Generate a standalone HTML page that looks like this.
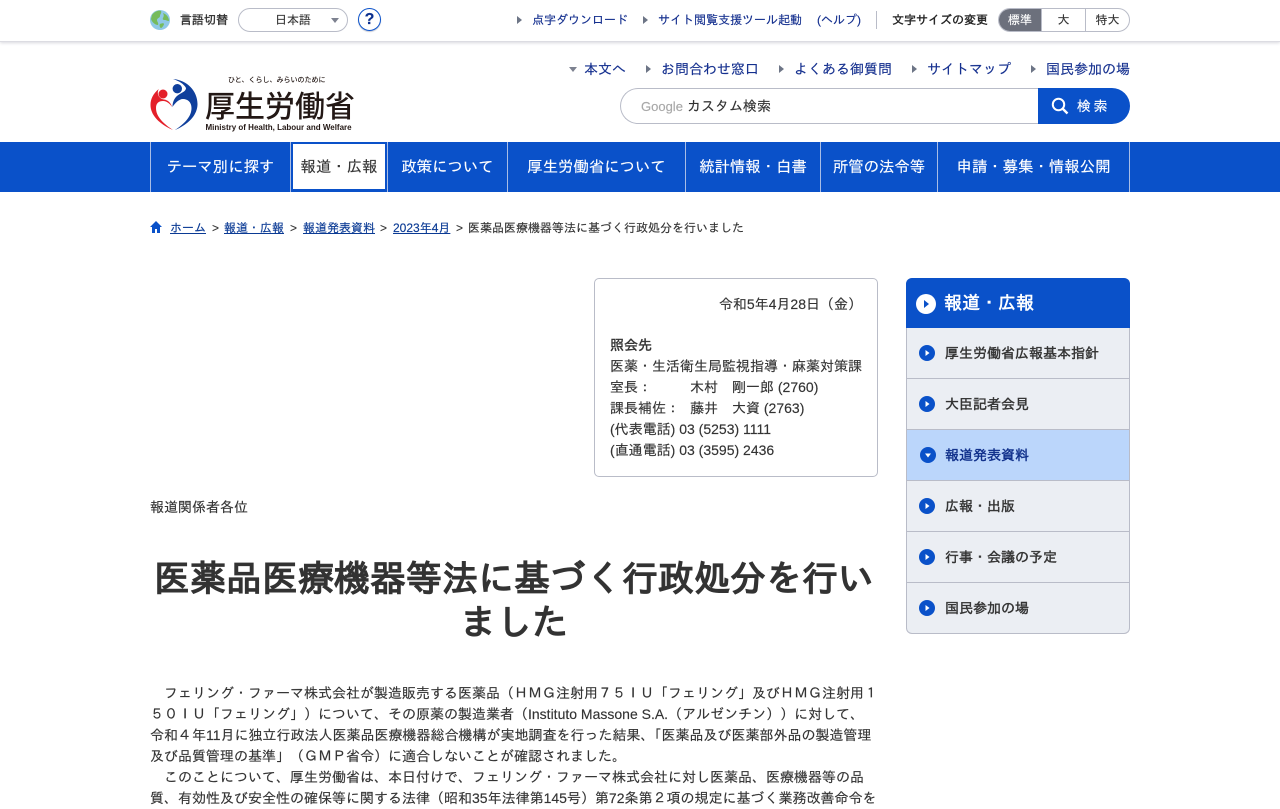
<!DOCTYPE html>
<html lang="ja">
<head>
<meta charset="utf-8">
<title>医薬品医療機器等法に基づく行政処分を行いました</title>
<style>
*{box-sizing:border-box}
html,body{margin:0;padding:0}
body{width:1280px;height:800px;overflow:hidden;background:#fff;position:relative;color:#333;font-family:"Liberation Sans","IPAGothic",sans-serif;font-size:14px;-webkit-text-stroke:.15px currentColor}
a{color:inherit;text-decoration:none}
.a{position:absolute;white-space:nowrap}
.bd{font-weight:normal;-webkit-text-stroke:.03em currentColor}
.top{position:absolute;left:0;top:0;width:1280px;height:42px;background:#fff;border-bottom:1px solid #dcdce2;box-shadow:0 1px 3px rgba(60,60,90,.2)}
.tri{position:absolute;width:0;height:0;border-style:solid;border-color:transparent transparent transparent #6d7586;border-width:4px 0 4px 5px}
.blue{color:#15308f}
.nav{position:absolute;left:0;top:142px;width:1280px;height:50px;background:#0a51c9}
.nav a{position:absolute;top:0;height:50px;line-height:52px;color:#fff;font-size:15.4px;text-align:center;border-left:1px solid #a9bde6;white-space:nowrap}
.crumb{position:absolute;top:220px;font-size:12px;line-height:16px;color:#333;white-space:nowrap}
.crumb u{color:#0a3a94}
.side{position:absolute;left:906px;top:278px;width:224px;height:356px;border:1px solid #b9bcc8;border-top:0;border-radius:6px;overflow:hidden;background:#ebeef3}
.h{position:absolute;left:906px;top:278px;width:224px;height:50px;background:#0a51c9;border-radius:6px 6px 0 0;color:#fff;font-size:18px;line-height:50px;padding-left:38px}
.side .i{position:absolute;left:0;width:222px;height:51px;line-height:50px;font-size:14px;color:#333;padding-left:38px;border-bottom:1px solid #b9bcc8}
.side .i svg{position:absolute;left:12px;top:17px}
.info{position:absolute;left:594px;top:278px;width:284px;height:199px;border:1px solid #b9bcc8;border-radius:5px;font-size:14px;line-height:21px;padding:15px}
.info i{font-style:normal;display:inline-block;width:80px}
.body{position:absolute;left:150px;top:683px;width:728px;font-size:14px;line-height:21px;color:#333;white-space:nowrap}
.logo{font-family:"Noto Sans CJK JP",sans-serif;font-weight:500;color:#231815;-webkit-text-stroke:0}
</style>
</head>
<body>
<div class="top"></div>
<svg class="a" style="left:150px;top:10px" width="20" height="20" viewBox="0 0 20 20"><circle cx="10" cy="10" r="10" fill="#8fc9e6"/><path d="M2 5C5 1 9 0 11 1c1 2-1 3-1 5s-3 2-3 4 2 3 1 5c-3 0-6-3-7-6z" fill="#76bb5c"/><path d="M13 3c3 1 6 4 6 8-2 0-3-1-4-1s-3 0-2-2 1-3 0-5zM10 14c2-1 4-1 4 0s-2 4-3 4-2-3-1-4z" fill="#76bb5c"/></svg>
<div class="a bd" style="left:180px;top:12px;font-size:12px;line-height:17px;color:#333">言語切替</div>
<div class="a" style="left:238px;top:8px;width:110px;height:24px;border:1px solid #b9bcc8;border-radius:12px"></div>
<div class="a" style="left:275px;top:12px;font-size:12px;line-height:17px;color:#333">日本語</div>
<div class="a" style="left:331px;top:18px;width:0;height:0;border-style:solid;border-color:#7d8290 transparent transparent;border-width:5px 4px 0"></div>
<div class="a" style="left:358px;top:8px;width:23px;height:23px;border:1px solid #0a51c9;border-radius:50%;box-shadow:0 1px 1px #c5c8d2;color:#0a2f8f;font-weight:bold;font-size:16px;line-height:21px;text-align:center">?</div>

<div class="tri" style="left:517px;top:16px"></div>
<a class="a blue" style="left:532px;top:12px;font-size:12px;line-height:17px">点字ダウンロード</a>
<div class="tri" style="left:643px;top:16px"></div>
<a class="a blue" style="left:658px;top:12px;font-size:12px;line-height:17px">サイト閲覧支援ツール起動</a>
<a class="a blue" style="left:817px;top:12px;font-size:12px;line-height:17px">(ヘルプ)</a>
<div class="a" style="left:876px;top:11px;width:1px;height:18px;background:#b9bcc8"></div>
<div class="a bd" style="left:892px;top:12px;font-size:12px;line-height:17px;color:#222">文字サイズの変更</div>
<div class="a" style="left:998px;top:8px;width:132px;height:24px;border:1px solid #b9bcc8;border-radius:12px;overflow:hidden;font-size:12px;line-height:23px;text-align:center;color:#333">
<div class="a" style="left:0;top:0;width:43px;height:22px;background:#6c707c;color:#fff;border-right:1px solid #b9bcc8">標準</div>
<div class="a" style="left:43px;top:0;width:44px;height:22px;border-right:1px solid #b9bcc8">大</div>
<div class="a" style="left:87px;top:0;width:43px;height:22px">特大</div>
</div>

<svg class="a" style="left:150px;top:79px" width="48" height="53" viewBox="0 0 48 53">
<path d="M23 0C37 1 47.5 12 47.5 25 47.5 37 37 46 25 51 34 45 41.5 38 41.5 29 41.5 23 37.5 20 33 20 29 20 25 24 22.500 28 22.500 22 25 18 29 15.500 33 13 36 12 36 9 34 5 29 2 23 0Z" fill="#0f3f9c"/>
<path d="M8.700 10C3 15 .5 20 .5 26 .5 37 11 46 23 51 14 45 6 38 6 29 6 24 9 22 13 22 17 22 20 25 22 28 21 24 18 21 14 20.500 10 20 6 16 8.700 10Z" fill="#e4202a"/>
<circle cx="13" cy="15" r="4.500" fill="#e4202a"/>
<circle cx="27.300" cy="9.700" r="4.700" fill="#0f3f9c"/>
</svg>
<div class="a logo" style="left:228px;top:75px;font-size:7px;line-height:11px">ひと、くらし、みらいのために</div>
<div class="a logo" style="left:205px;top:84px;font-size:30px;line-height:40px">厚生労働省</div>
<div class="a" style="left:205.5px;top:122px;font-size:8px;line-height:11px;font-weight:bold;color:#231815;-webkit-text-stroke:0">Ministry of Health, Labour and Welfare</div>

<div class="a" style="left:569px;top:67px;width:0;height:0;border-style:solid;border-color:#7d8290 transparent transparent;border-width:5px 4px 0"></div>
<a class="a blue" style="left:584px;top:59px;line-height:20px">本文へ</a>
<div class="tri" style="left:646px;top:65px"></div>
<a class="a blue" style="left:661px;top:59px;line-height:20px">お問合わせ窓口</a>
<div class="tri" style="left:779px;top:65px"></div>
<a class="a blue" style="left:794px;top:59px;line-height:20px">よくある御質問</a>
<div class="tri" style="left:912px;top:65px"></div>
<a class="a blue" style="left:927px;top:59px;line-height:20px">サイトマップ</a>
<div class="tri" style="left:1031px;top:65px"></div>
<a class="a blue" style="left:1046px;top:59px;line-height:20px">国民参加の場</a>

<div class="a" style="left:620px;top:88px;width:420px;height:36px;border:1px solid #b9bcc8;border-right:0;border-radius:18px 0 0 18px"></div>
<div class="a" style="left:641px;top:98px;font-size:13px;line-height:17px;color:#a8a8a8">Google</div>
<div class="a" style="left:687px;top:96px;font-size:14px;line-height:20px;color:#333">カスタム検索</div>
<div class="a" style="left:1038px;top:88px;width:92px;height:36px;background:#0a51c9;border-radius:0 18px 18px 0"></div>
<svg class="a" style="left:1051px;top:97px" width="18" height="18" viewBox="0 0 18 18"><circle cx="7.5" cy="7.5" r="5.7" fill="none" stroke="#fff" stroke-width="2"/><path d="M11.5 11.5L16.5 16.5" stroke="#fff" stroke-width="2.4"/></svg>
<div class="a" style="left:1077px;top:96px;font-size:14px;line-height:20px;color:#fff;letter-spacing:2.5px">検索</div>

<div class="nav">
<a style="left:150px;width:140px">テーマ別に探す</a>
<a style="left:290px;width:97px;background:#fff;color:#333;border-left:1px solid #a9bde6;"><span style="position:absolute;left:0;top:0;width:96px;height:50px;border:2px solid #0a51c9;border-bottom-width:3px;line-height:48px">報道・広報</span></a>
<a style="left:387px;width:120px">政策について</a>
<a style="left:507px;width:178px">厚生労働省について</a>
<a style="left:685px;width:135px">統計情報・白書</a>
<a style="left:820px;width:117px">所管の法令等</a>
<a style="left:937px;width:193px;border-right:1px solid #a9bde6">申請・募集・情報公開</a>
</div>

<svg class="a" style="left:150px;top:221px" width="12" height="12" viewBox="0 0 12 12"><path d="M6 0L0 6h2v6h3V8h2v4h3V6h2z" fill="#0a51c9"/></svg>
<div class="crumb" style="left:170px"><u>ホーム</u></div>
<div class="crumb" style="left:212px">&gt;</div>
<div class="crumb" style="left:224px"><u>報道・広報</u></div>
<div class="crumb" style="left:290px">&gt;</div>
<div class="crumb" style="left:303px"><u>報道発表資料</u></div>
<div class="crumb" style="left:380px">&gt;</div>
<div class="crumb" style="left:393px"><u>2023年4月</u></div>
<div class="crumb" style="left:456px">&gt;</div>
<div class="crumb" style="left:468px">医薬品医療機器等法に基づく行政処分を行いました</div>

<div class="info">
<div style="text-align:right;height:41px">令和5年4月28日（金）</div>
<div class="bd">照会先</div>
<div>医薬・生活衛生局監視指導・麻薬対策課</div>
<div><i>室長：</i>木村　剛一郎 (2760)</div>
<div><i>課長補佐：</i>藤井　大資 (2763)</div>
<div>(代表電話) 03 (5253) 1111</div>
<div>(直通電話) 03 (3595) 2436</div>
</div>

<div class="a" style="left:150px;top:497px;line-height:21px">報道関係者各位</div>
<div class="a bd" style="left:150px;top:557px;width:728px;text-align:center;white-space:normal;font-size:36px;line-height:44px;color:#333;-webkit-text-stroke:1.4px #333">医薬品医療機器等法に基づく行政処分を行いました</div>

<div class="body">
　フェリング・ファーマ株式会社が製造販売する医薬品（ＨＭＧ注射用７５ＩＵ「フェリング」及びＨＭＧ注射用１<br>
５０ＩＵ「フェリング」）について、その原薬の製造業者（Instituto Massone S.A.（アルゼンチン））に対して、<br>
令和４年11月に独立行政法人医薬品医療機器総合機構が実地調査を行った結果<span style="letter-spacing:-7px">、</span>「医薬品及び医薬部外品の製造管理<br>
及び品質管理の基準」（ＧＭＰ省令）に適合しないことが確認されました。<br>
　このことについて、厚生労働省は、本日付けで、フェリング・ファーマ株式会社に対し医薬品、医療機器等の品<br>
質、有効性及び安全性の確保等に関する法律（昭和35年法律第145号）第72条第２項の規定に基づく業務改善命令を<br>
</div>

<div class="side">
<div class="i bd" style="top:50px"><svg width="16" height="16" viewBox="0 0 16 16"><circle cx="8" cy="8" r="8" fill="#0a51c9"/><path d="M6.500 5l4 3-4 3z" fill="#fff"/></svg>厚生労働省広報基本指針</div>
<div class="i bd" style="top:101px"><svg width="16" height="16" viewBox="0 0 16 16"><circle cx="8" cy="8" r="8" fill="#0a51c9"/><path d="M6.500 5l4 3-4 3z" fill="#fff"/></svg>大臣記者会見</div>
<div class="i bd" style="top:152px;background:#bbd6fb;color:#0f2f8a"><svg width="16" height="16" viewBox="0 0 16 16" style="left:13px"><circle cx="8" cy="8" r="8" fill="#0a51c9"/><path d="M5 6.500l3 4 3-4z" fill="#fff"/></svg>報道発表資料</div>
<div class="i bd" style="top:203px"><svg width="16" height="16" viewBox="0 0 16 16"><circle cx="8" cy="8" r="8" fill="#0a51c9"/><path d="M6.500 5l4 3-4 3z" fill="#fff"/></svg>広報・出版</div>
<div class="i bd" style="top:254px"><svg width="16" height="16" viewBox="0 0 16 16"><circle cx="8" cy="8" r="8" fill="#0a51c9"/><path d="M6.500 5l4 3-4 3z" fill="#fff"/></svg>行事・会議の予定</div>
<div class="i bd" style="top:305px;border-bottom:0"><svg width="16" height="16" viewBox="0 0 16 16"><circle cx="8" cy="8" r="8" fill="#0a51c9"/><path d="M6.500 5l4 3-4 3z" fill="#fff"/></svg>国民参加の場</div>
</div>
<div class="h bd">報道・広報</div>
<svg class="a" style="left:916px;top:294px" width="20" height="20" viewBox="0 0 20 20"><circle cx="10" cy="10" r="10" fill="#fff"/><path d="M8 6l5 4-5 4z" fill="#0a51c9"/></svg>
</body>
</html>
